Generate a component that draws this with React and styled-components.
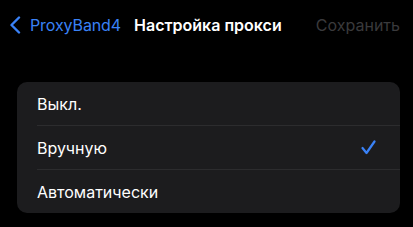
import React from 'react'
import styled, { createGlobalStyle } from 'styled-components'

const Global = createGlobalStyle`
  html, body {
    margin: 0;
    padding: 0;
    background: #000;
  }
  body {
    font-family: Inter, "Noto Sans", sans-serif;
    -webkit-font-smoothing: antialiased;
  }
`

function Chevron() {
  return (
    <svg width="12" height="18" viewBox="0 0 12 18">
      <path d="M10 1.5 L2.5 9 L10 16.5" fill="none" stroke="#3a82f7" strokeWidth="2.4" strokeLinecap="round" strokeLinejoin="round" />
    </svg>
  )
}

function Check() {
  return (
    <svg width="15" height="15" viewBox="0 0 15 15">
      <path d="M1.5 8 L5.5 13 L13.5 1.5" fill="none" stroke="#3a82f7" strokeWidth="2.2" strokeLinecap="round" strokeLinejoin="round" />
    </svg>
  )
}

const options = [
  { label: 'Выкл.', checked: false },
  { label: 'Вручную', checked: true },
  { label: 'Автоматически', checked: false },
]

function App() {
  return (
    <Page>
      <Global />
      <NavBar>
        <Back>
          <Chevron />
          <BackText>ProxyBand4</BackText>
        </Back>
        <Title>Настройка прокси</Title>
        <Save>Сохранить</Save>
      </NavBar>
      <Card>
        {options.map((o, i) => (
          <Row key={o.label} last={i === options.length - 1}>
            <Label>{o.label}</Label>
            {o.checked && <Mark><Check /></Mark>}
          </Row>
        ))}
      </Card>
    </Page>
  )
}

const Page = styled.div`
  width: 413px;
  height: 227px;
  background: #000;
  overflow: hidden;
`

const NavBar = styled.div`
  height: 50px;
  display: flex;
  align-items: center;
  padding: 0 13px 0 9px;
  font-size: 16px;
`

const Back = styled.div`
  display: flex;
  align-items: center;
  gap: 9px;
  color: #3a82f7;
`

const BackText = styled.span`
  letter-spacing: -0.1px;
`

const Title = styled.div`
  margin-left: 13px;
  color: #fff;
  font-weight: 600;
`

const Save = styled.div`
  margin-left: auto;
  color: #3a3a3c;
`

const Card = styled.div`
  margin: 32px 13px 0 17px;
  background: #1c1c1e;
  border-radius: 10px;
  padding-left: 20px;
`

const Row = styled.div`
  height: 43px;
  display: flex;
  align-items: center;
  padding-right: 24px;
  border-bottom: ${p => (p.last ? 'none' : '1px solid #2c2c2e')};
`

const Label = styled.span`
  color: #fff;
  font-size: 16px;
`

const Mark = styled.span`
  margin-left: auto;
  display: flex;
`

export default App
